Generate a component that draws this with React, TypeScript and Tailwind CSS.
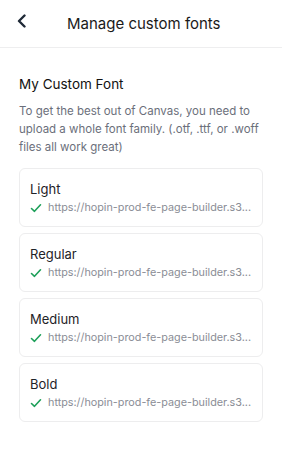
import React from "react";

const weights = ["Light", "Regular", "Medium", "Bold"];

export default function App() {
  return (
    <div className="w-[282px] h-[455px] bg-white" style={{ fontFamily: "Inter, 'Noto Sans', sans-serif" }}>
      <div className="h-[48px] flex items-center border-b border-[#eeeeef] relative">
        <div className="absolute left-[16px] top-[14px] w-[12px] h-[14px]">
          <svg width="12" height="14" viewBox="0 0 12 14" fill="none">
            <path d="M8.5 1.5 L3 7 L8.5 12.5" stroke="#1f2937" strokeWidth="2.4" strokeLinecap="round" strokeLinejoin="round" />
          </svg>
        </div>
        <div className="pl-[67px] text-[15px] text-[#1a1a1a] leading-none -mt-[1px]">Manage custom fonts</div>
      </div>
      <div className="px-[19px] pt-[27px]">
        <div className="text-[13.5px] text-[#111] leading-[18px]">My Custom Font</div>
        <p className="mt-[9px] text-[11.5px] leading-[18px] text-[#6b6f7b]">
          To get the best out of Canvas, you need to upload a whole font family. (.otf, .ttf, or .woff files all work great)
        </p>
        <div className="mt-[12px] flex flex-col gap-[6px]">
          {weights.map((w) => (
            <div key={w} className="h-[59px] border border-[#ededee] rounded-[6px] pl-[10px] pr-[10px] pt-[12px]">
              <div className="text-[13px] leading-[16px] text-[#1f2328]">{w}</div>
              <div className="mt-[3px] flex items-center gap-[6px]">
                <svg className="shrink-0" width="12" height="10" viewBox="0 0 12 10" fill="none">
                  <path d="M1.5 5.5 L4.5 8.3 L10.5 1.8" stroke="#1ea05a" strokeWidth="1.6" strokeLinecap="round" strokeLinejoin="round" />
                </svg>
                <span className="text-[10.8px] leading-[16px] text-[#8a8d96] whitespace-nowrap">https://hopin-prod-fe-page-builder.s3...</span>
              </div>
            </div>
          ))}
        </div>
      </div>
    </div>
  );
}
